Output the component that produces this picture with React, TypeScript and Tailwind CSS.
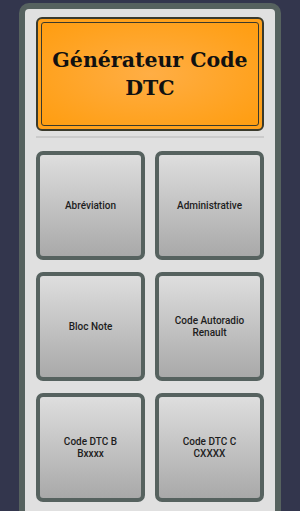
import React from 'react';

const buttons: string[][] = [
    ['Abréviation'],
    ['Administrative'],
    ['Bloc Note'],
    ['Code Autoradio', 'Renault'],
    ['Code DTC B', 'Bxxxx'],
    ['Code DTC C', 'CXXXX'],
];

export default function App() {
    return (
        <div className="h-[511px] w-[300px] overflow-hidden bg-[#33364d] px-[19px] pt-[3px]">
            {/* panneau principal */}
            <div className="h-[520px] rounded-t-[10px] border-[6px] border-b-0 border-[#56625f] bg-[#e0e0e0] px-[11px] pt-[8px]">
                {/* titre */}
                <div className="h-[114px] rounded-[6px] border-2 border-[#3a3a2c] bg-[#ffa11c] p-[3px]">
                    <div className="flex h-full items-center justify-center rounded-[3px] border border-[#3a3a2c] bg-[radial-gradient(ellipse_at_center,#ffae45_0%,#ffa21f_70%,#ff9d10_100%)]">
                        <h1 className="text-center font-['DejaVu_Serif',serif] text-[20.5px] font-bold leading-[28px] text-[#111]">
                            Générateur Code
                            <br />
                            DTC
                        </h1>
                    </div>
                </div>

                <div className="mt-[5px] h-[2px] bg-[#cbcbcb]" />

                {/* boutons */}
                <div className="mt-[13px] grid grid-cols-2 gap-x-[10px] gap-y-[12px]">
                    {buttons.map((lines) => (
                        <button
                            key={lines.join(' ')}
                            className="flex h-[109px] flex-col items-center justify-center rounded-[7px] border-4 border-[#56625f] bg-gradient-to-b from-[#dedede] to-[#a9a9a9] font-['Roboto',sans-serif] text-[10px] font-medium leading-[12px] text-[#1d1d1d]"
                        >
                            {lines.map((l) => (
                                <span key={l}>{l}</span>
                            ))}
                        </button>
                    ))}
                </div>
            </div>
        </div>
    );
}
